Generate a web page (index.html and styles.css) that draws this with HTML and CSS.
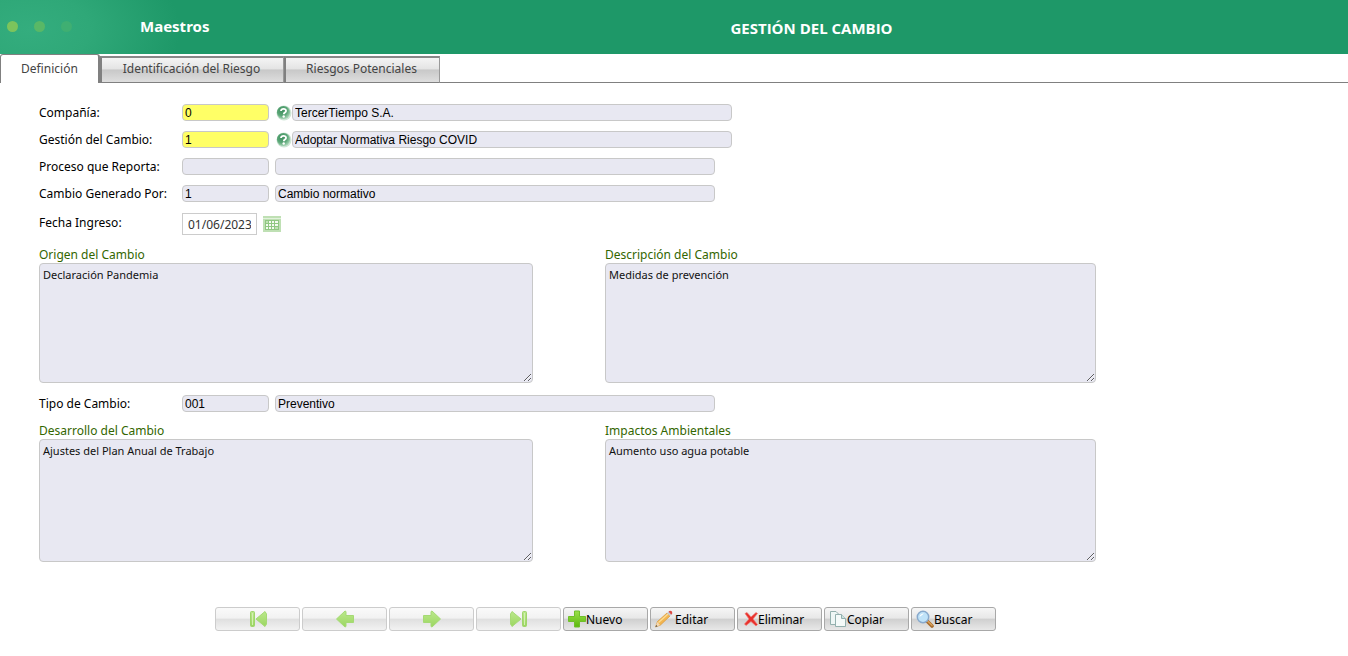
FILE: index.html
```html
<!DOCTYPE html>
<html lang="es">
<head>
    <meta charset="UTF-8" />
    <meta name="viewport" content="width=device-width, initial-scale=1" />
    <title>Gestión del Cambio</title>
    <link rel="stylesheet" href="styles.css">
</head>
<body>
    <header class="header">
        <div class="brand">
            <span class="dot"></span>
            <span class="dot dot-mid"></span>
            <span class="dot dot-low"></span>
            <span class="module">Maestros</span>
        </div>
        <h1 class="title">GESTIÓN DEL CAMBIO</h1>
    </header>

    <nav class="tabs">
        <button type="button" class="tab active">Definición</button>
        <button type="button" class="tab tab-wide">Identificación del Riesgo</button>
        <button type="button" class="tab">Riesgos Potenciales</button>
    </nav>

    <!-- Help icon shared by the lookup fields -->
    <svg class="defs" width="0" height="0">
        <defs>
            <radialGradient id="ball" cx="40%" cy="35%" r="65%">
                <stop offset="0" stop-color="#3f8f5e" />
                <stop offset="0.6" stop-color="#5aa677" />
                <stop offset="1" stop-color="#a5d3b3" />
            </radialGradient>
            <linearGradient id="leaf" x1="0" y1="0" x2="0" y2="1">
                <stop offset="0" stop-color="#bbe88c" />
                <stop offset="1" stop-color="#9bd660" />
            </linearGradient>
            <linearGradient id="plus" x1="0" y1="0" x2="0" y2="1">
                <stop offset="0" stop-color="#9be04a" />
                <stop offset="1" stop-color="#5cb80c" />
            </linearGradient>
            <symbol id="help" viewBox="0 0 16 16">
                <circle cx="8" cy="8" r="7.5" fill="#cfe5d6" />
                <circle cx="7.5" cy="7.5" r="6.6" fill="url(#ball)" />
                <path d="M5 6C5.2 3.2 10.2 3.1 10 6C9.9 7.7 7.9 7.5 7.8 9.2" fill="none" stroke="#fff" stroke-width="1.9" />
                <circle cx="7.7" cy="11.5" r="1.2" fill="#fff" />
            </symbol>
        </defs>
    </svg>

    <form class="form">
        <div class="row">
            <label class="label" for="compania">Compañía:</label>
            <input class="field code key" id="compania" type="text" value="0" />
            <button type="button" class="icon-btn help" aria-label="Buscar compañía"><svg width="16" height="16"><use href="#help" /></svg></button>
            <input class="field desc" type="text" value="TercerTiempo S.A." aria-label="Nombre de la compañía" readonly />
        </div>
        <div class="row">
            <label class="label" for="gestion">Gestión del Cambio:</label>
            <input class="field code key" id="gestion" type="text" value="1" />
            <button type="button" class="icon-btn help" aria-label="Buscar gestión"><svg width="16" height="16"><use href="#help" /></svg></button>
            <input class="field desc" type="text" value="Adoptar Normativa Riesgo COVID" aria-label="Descripción de la gestión" readonly />
        </div>
        <div class="row">
            <label class="label" for="proceso">Proceso que Reporta:</label>
            <input class="field code" id="proceso" type="text" readonly />
            <input class="field desc spaced" type="text" aria-label="Nombre del proceso" readonly />
        </div>
        <div class="row">
            <label class="label" for="generado">Cambio Generado Por:</label>
            <input class="field code" id="generado" type="text" value="1" readonly />
            <input class="field desc spaced" type="text" value="Cambio normativo" aria-label="Descripción del origen" readonly />
        </div>
        <div class="row row-date">
            <label class="label" for="fecha">Fecha Ingreso:</label>
            <input class="date" id="fecha" type="text" value="01/06/2023" />
            <button type="button" class="icon-btn" aria-label="Calendario">
                <svg width="18" height="16" viewBox="0 0 18 16">
                    <rect width="18" height="16" fill="#bfe0b4" />
                    <rect y="2" width="18" height="1" fill="#e2f2dc" />
                    <rect x="2" y="4" width="14" height="10" fill="#8fc781" />
                    <path d="M6 5h2v2H6zM9 5h2v2H9zM12 5h3v2h-3zM3 8h2v2H3zM6 8h2v2H6zM9 8h2v2H9zM12 8h3v2h-3zM3 11h2v2H3zM6 11h2v2H6zM9 11h2v2H9z" fill="#f3faf0" />
                    <path d="M3 5h2v2H3zM12 11h3v2h-3z" fill="#bfe0b4" />
                </svg>
            </button>
        </div>

        <div class="areas">
            <div class="area">
                <label for="origen">Origen del Cambio</label>
                <textarea id="origen" readonly>Declaración Pandemia</textarea>
            </div>
            <div class="area">
                <label for="descripcion">Descripción del Cambio</label>
                <textarea id="descripcion" readonly>Medidas de prevención</textarea>
            </div>
        </div>

        <div class="row">
            <label class="label" for="tipo">Tipo de Cambio:</label>
            <input class="field code" id="tipo" type="text" value="001" readonly />
            <input class="field desc spaced" type="text" value="Preventivo" aria-label="Descripción del tipo" readonly />
        </div>

        <div class="areas tall">
            <div class="area">
                <label for="desarrollo">Desarrollo del Cambio</label>
                <textarea id="desarrollo" readonly>Ajustes del Plan Anual de Trabajo</textarea>
            </div>
            <div class="area">
                <label for="impactos">Impactos Ambientales</label>
                <textarea id="impactos" readonly>Aumento uso agua potable</textarea>
            </div>
        </div>
    </form>

    <div class="toolbar">
        <button type="button" class="btn nav" disabled aria-label="Primero">
            <svg width="18" height="18" viewBox="0 0 18 18"><rect x="1.5" y="1.5" width="4" height="15" rx="1" fill="url(#leaf)" stroke="#9fd56c" /><path d="M3.5 3v12" stroke="#d3f0b4" /><path d="M7 9L16 1.5L17.5 4V14L16 16.5Z" fill="url(#leaf)" stroke="#a5da74" /></svg>
        </button>
        <button type="button" class="btn nav" disabled aria-label="Anterior">
            <svg width="18" height="18" viewBox="0 0 18 18"><path d="M0.5 9L9 1L10 1.5V5.5H17.5V12.5H10V16.5L9 17Z" fill="url(#leaf)" stroke="#a5da74" /></svg>
        </button>
        <button type="button" class="btn nav" disabled aria-label="Siguiente">
            <svg width="18" height="18" viewBox="0 0 18 18"><path d="M17.5 9L9 1L8 1.5V5.5H0.5V12.5H8V16.5L9 17Z" fill="url(#leaf)" stroke="#a5da74" /></svg>
        </button>
        <button type="button" class="btn nav" disabled aria-label="Último">
            <svg width="18" height="18" viewBox="0 0 18 18"><rect x="12.5" y="1.5" width="4" height="15" rx="1" fill="url(#leaf)" stroke="#9fd56c" /><path d="M14.5 3v12" stroke="#d3f0b4" /><path d="M11 9L2 1.5L0.5 4V14L2 16.5Z" fill="url(#leaf)" stroke="#a5da74" /></svg>
        </button>
        <button type="button" class="btn">
            <svg width="18" height="18" viewBox="0 0 18 18"><path d="M6.5 1H11.5V6.5H17.5V11.5H11.5V17H6.5V11.5H0.5V6.5H6.5Z" fill="url(#plus)" stroke="#6fbf2a" stroke-linejoin="round" /></svg>Nuevo
        </button>
        <button type="button" class="btn btn-gap">
            <svg width="18" height="18" viewBox="0 0 18 18"><path d="M0.5 17L2.5 11.5L12 3L15 6L5.5 15Z" fill="#f2b550" stroke="#d9963a" stroke-width="0.7" /><path d="M3.5 12.5L13 4" stroke="#fbdc95" stroke-width="1.4" /><path d="M0.5 17L2.3 12L5 15Z" fill="#f3d9b5" /><path d="M0.5 17L1.2 15L2.5 16.2Z" fill="#444" /><path d="M12 3L13.5 1.7L16.3 4.8L15 6Z" fill="#c9ced6" /><path d="M13.5 1.7Q15 0 17 1.5Q18 3.3 16.3 4.8Z" fill="#dc4b43" /></svg>Editar
        </button>
        <button type="button" class="btn btn-tight">
            <svg width="14" height="18" viewBox="0 0 14 18"><path d="M1 3.5L3 2.5L7 7L12 2.5L13.5 3.5L9 9L13.5 14.5L12 16L7 11.5L2 15.5L0.5 14L5 9Z" fill="#e8312c" stroke="#f07a72" stroke-width="0.7" /></svg>Eliminar
        </button>
        <button type="button" class="btn">
            <svg width="18" height="18" viewBox="0 0 18 18"><path d="M1.5 1.5H7L10.5 5V14.5H1.5Z" fill="#eef6f5" stroke="#93b0ae" /><path d="M6.5 4.5H12.5L16.5 8.5V16.5H6.5Z" fill="#f4faf9" stroke="#93b0ae" /><path d="M12.5 4.5V8.5H16.5" fill="#cfe3e0" stroke="#93b0ae" /></svg>Copiar
        </button>
        <button type="button" class="btn">
            <svg width="18" height="18" viewBox="0 0 18 18"><path d="M11 11L16 16" stroke="#a86d2e" stroke-width="3.6" stroke-linecap="round" /><path d="M11.5 11L16 15.3" stroke="#dda35c" stroke-width="1.4" stroke-linecap="round" /><circle cx="7" cy="7" r="5.7" fill="#bfe2f8" stroke="#88a9cc" stroke-width="1.5" /><path d="M3.5 7Q4 3.5 8 3.5Q6 5 3.5 7Z" fill="#fff" /></svg>Buscar
        </button>
    </div>

    <script>
        const tabs = document.querySelectorAll('.tab');

        tabs.forEach(tab => {
            tab.addEventListener('click', () => {
                tabs.forEach(t => t.classList.remove('active'));
                tab.classList.add('active');
            });
        });
    </script>
</body>
</html>
```
FILE: styles.css
```css
body {
    margin: 0;
    background: #fff;
    color: #000;
    font-family: "Noto Sans", sans-serif;
    font-size: 12px;
}
button, input, textarea {
    box-sizing: border-box;
    margin: 0;
    font-family: inherit;
}
.defs {
    position: absolute;
}
/* Header */
.header {
    display: flex;
    align-items: center;
    box-sizing: border-box;
    height: 54px;
    padding-bottom: 2px;
    background: radial-gradient(ellipse 150px 90px at 30px 30px, #34ad7e 0%, #2fa878 40%, #1e9868 100%);
    color: #fff;
}
.brand {
    display: flex;
    align-items: center;
    gap: 16px;
    width: 268px;
    padding-left: 7px;
    flex-shrink: 0;
}
.dot {
    width: 11px;
    height: 11px;
    border-radius: 50%;
    background: #7cc45c;
}
.dot-mid {
    background: #59b866;
}
.dot-low {
    background: #3faf72;
}
.module {
    padding-left: 52px;
    font-size: 15px;
    font-weight: bold;
    line-height: 18px;
}
.title {
    flex: 1;
    margin: 0;
    padding-top: 3px;
    font-family: "Open Sans", sans-serif;
    font-size: 15px;
    text-align: center;
}
/* Tabs */
.tabs {
    display: flex;
    align-items: flex-end;
    height: 29px;
    background: linear-gradient(#808080, #808080) bottom / 100% 1px no-repeat;
}
.tab {
    width: 156px;
    height: 27px;
    padding: 0 2px 3px 0;
    border: 1px solid #999;
    border-top: 2px solid #888;
    border-left: 2px solid #808080;
    border-bottom-color: #808080;
    background: linear-gradient(#f4f4f4, #e4e4e4 45%, #c8c8c8 50%, #dedede 100%);
    color: #444;
    font-size: 12px;
    cursor: pointer;
}
.tab-wide {
    width: 184px;
}
.tab.active {
    width: 100px;
    height: 29px;
    padding: 0 0 2px;
    border: 1px solid #808080;
    border-right-width: 2px;
    border-bottom: none;
    border-radius: 3px 3px 0 0;
    background: #fff;
}
/* Form */
.form {
    max-width: 1057px;
    padding: 16px 39px 0;
}
.row {
    display: flex;
    align-items: center;
    height: 27px;
}
.row-date {
    height: 34px;
}
.label {
    width: 143px;
    flex-shrink: 0;
}
.row-date .label {
    padding-bottom: 4px;
}
.field {
    height: 17px;
    padding: 1px 2px 0;
    border: 1px solid #c8c8c8;
    border-radius: 4px;
    background: #e8e8f2;
    color: #000;
    font-family: "Liberation Sans", Arial, sans-serif;
    font-size: 12px;
}
.code {
    width: 87px;
}
.key {
    background: #ffff66;
}
.desc {
    width: 440px;
}
.spaced {
    margin-left: 6px;
}
.icon-btn {
    display: flex;
    padding: 0;
    border: none;
    background: none;
    cursor: pointer;
}
.help {
    margin-left: 7px;
}
.date {
    width: 75px;
    height: 22px;
    margin-right: 6px;
    padding: 0 5px;
    border: 1px solid #ccc;
    color: #333;
    font-size: 12px;
}
.areas {
    display: grid;
    grid-template-columns: 494fr 491fr;
    gap: 72px;
    margin: 6px 0 7px;
}
.area {
    display: flex;
    flex-direction: column;
}
.area label {
    color: #336600;
    line-height: 16px;
}
.area textarea {
    width: 100%;
    height: 120px;
    padding: 3px;
    border: 1px solid #c8c8c8;
    border-radius: 4px;
    background: #e8e8f2;
    color: #111;
    font-size: 11px;
    line-height: 16px;
}
.tall textarea {
    height: 123px;
}
/* Toolbar */
.toolbar {
    display: flex;
    gap: 2px;
    padding: 38px 0 25px 215px;
}
.btn {
    display: flex;
    align-items: center;
    width: 85px;
    height: 24px;
    padding: 0 4px;
    border: 1px solid #a8a8a8;
    border-radius: 3px;
    background: linear-gradient(#f6f6f6, #e8e8e8 45%, #d0d0d0 52%, #e8e8e8 100%);
    color: #000;
    font-size: 12px;
    cursor: pointer;
}
.btn-gap {
    gap: 2px;
}
.btn-tight {
    padding-left: 6px;
}
.btn.nav {
    justify-content: center;
    border-color: #ccc;
    background: linear-gradient(#fafafa, #f2f2f2 45%, #e0e0e0 52%, #f2f2f2 100%);
    cursor: default;
}
```
